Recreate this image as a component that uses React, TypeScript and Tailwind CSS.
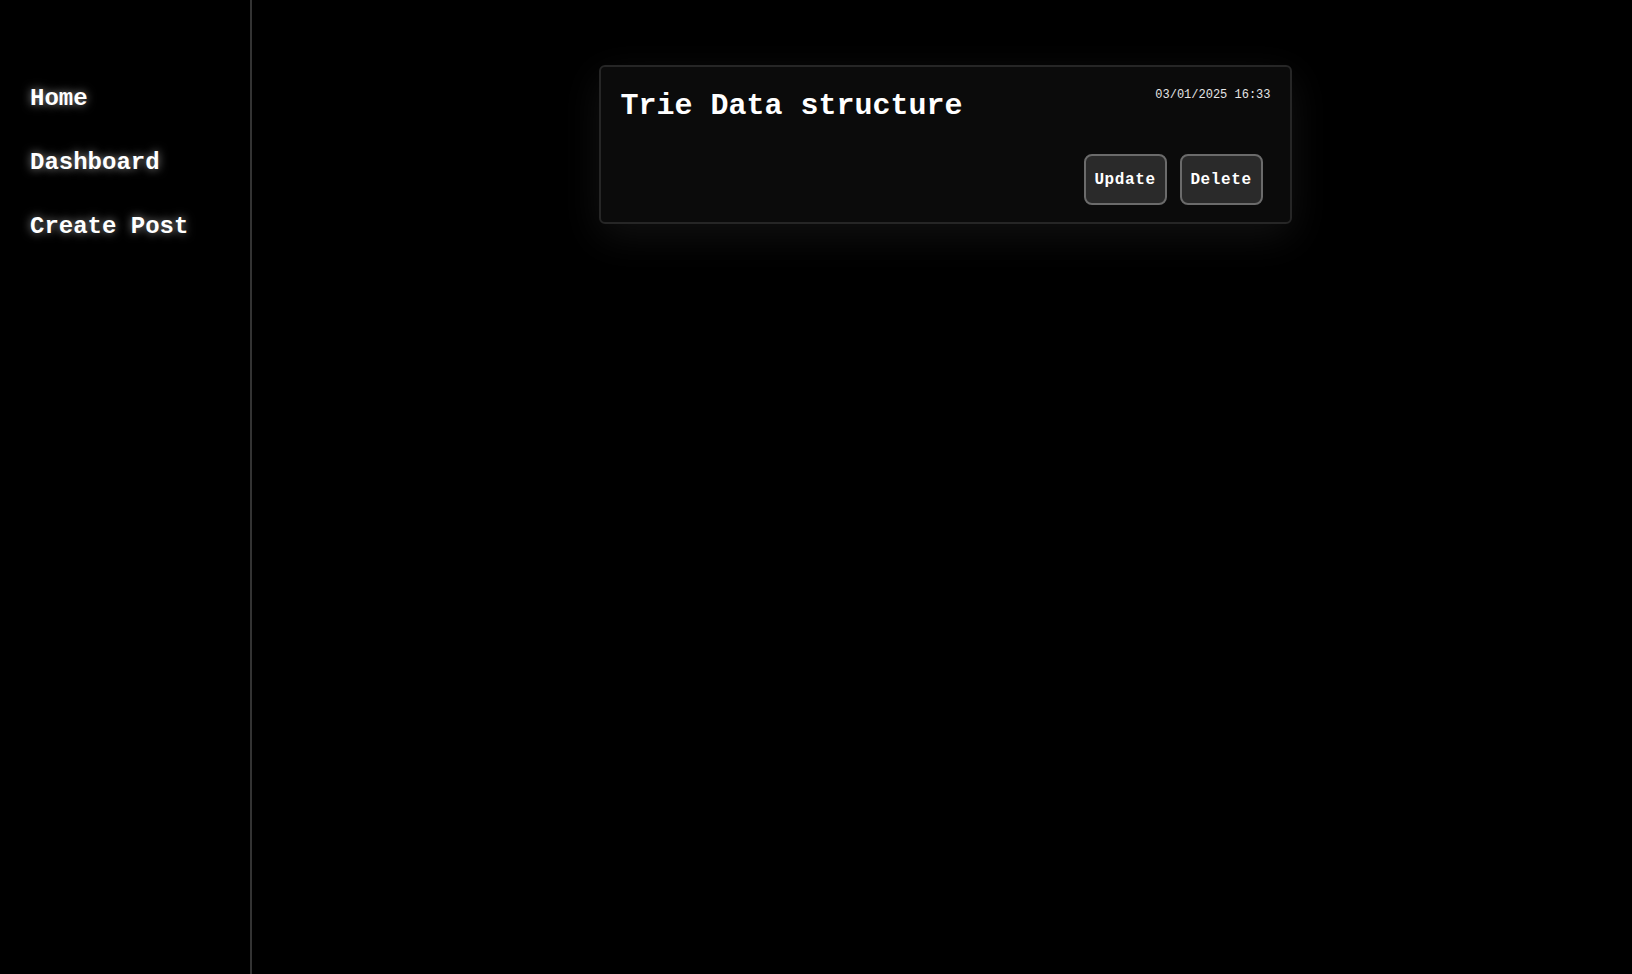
const navItems = ["Home", "Dashboard", "Create Post"];

const App = () => {
  return (
    <div
      className="flex min-h-screen bg-black text-white"
      style={{ fontFamily: '"Liberation Mono", "Courier New", monospace' }}
    >
      {/* Sidebar */}
      <aside className="w-[252px] h-screen shrink-0 border-r-2 border-[#333333] pt-[85px] pl-[30px]">
        <nav className="flex flex-col gap-[36px]">
          {navItems.map((item) => (
            <a
              key={item}
              href="#"
              className="text-[24px] leading-[28px] font-bold text-white [text-shadow:0_0_10px_rgba(255,255,255,0.6)]"
            >
              {item}
            </a>
          ))}
        </nav>
      </aside>

      {/* Main content */}
      <main className="flex-1 flex justify-center items-start pt-[65px] pl-[6px]">
        <div className="w-[693px] rounded-md border-2 border-[#262626] bg-[#0b0b0b] pl-[20px] pr-[19px] pt-[22px] pb-[17px] shadow-[0_12px_40px_rgba(255,255,255,0.07)]">
          <div className="flex items-start justify-between">
            <h2 className="text-[30px] leading-[34px] font-bold">Trie Data structure</h2>
            <span className="text-[12px] leading-[14px] -mt-[1px] text-[#e5e5e5]">03/01/2025 16:33</span>
          </div>
          <div className="flex justify-end gap-[13px] mt-[31px] mr-[8px]">
            <button className="w-[83px] h-[51px] rounded-lg border-2 border-[#6b6b6b] bg-[#2a2a2a] text-[16px] font-bold tracking-[0.6px] text-white">
              Update
            </button>
            <button className="w-[83px] h-[51px] rounded-lg border-2 border-[#6b6b6b] bg-[#2a2a2a] text-[16px] font-bold tracking-[0.6px] text-white">
              Delete
            </button>
          </div>
        </div>
      </main>
    </div>
  );
};

export default App;
